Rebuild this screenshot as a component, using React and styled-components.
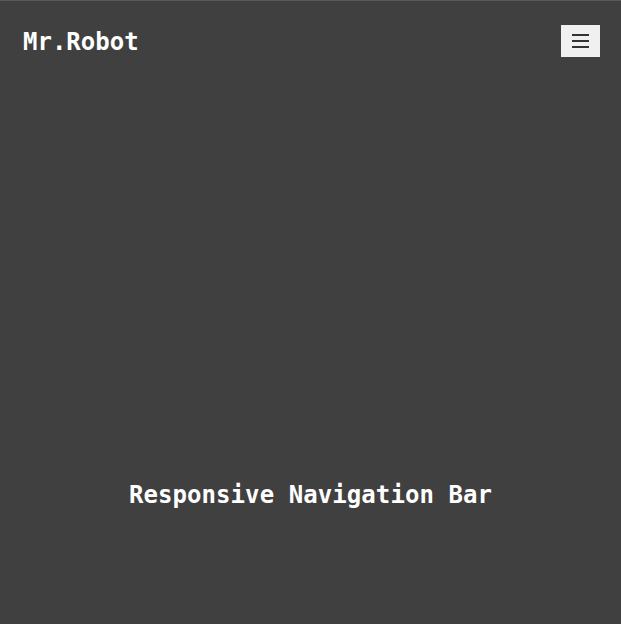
import React from 'react';
import styled, { createGlobalStyle } from 'styled-components';

const GlobalStyle = createGlobalStyle`
  html, body {
    margin: 0;
    padding: 0;
    background: #404040;
  }
  body {
    font-family: "DejaVu Sans Mono", "Liberation Mono", monospace;
    color: #ffffff;
  }
`;

const Page = styled.div`
  min-height: 624px;
  border-top: 1px solid #5a5a5a;
  box-sizing: border-box;
  background: #404040;
`;

const Nav = styled.nav`
  height: 80px;
  display: flex;
  align-items: center;
  justify-content: space-between;
  padding: 0 21px 0 23px;
`;

const Logo = styled.div`
  font-size: 24px;
  font-weight: 700;
  padding-top: 2px;
`;

const MenuButton = styled.button`
  width: 39px;
  height: 32px;
  background: #f0f0f0;
  border: none;
  padding: 0;
  display: flex;
  flex-direction: column;
  align-items: center;
  justify-content: center;
  gap: 4px;
  cursor: pointer;
`;

const Bar = styled.span`
  display: block;
  width: 17px;
  height: 2px;
  background: #333333;
`;

const Hero = styled.main`
  padding-top: 400px;
  text-align: center;
`;

const Heading = styled.h1`
  margin: 0;
  font-size: 24px;
  font-weight: 700;
  line-height: 28px;
  letter-spacing: 0.08px;
`;

export default function App() {
  return (
    <>
      <GlobalStyle />
      <Page>
        <Nav>
          <Logo>Mr.Robot</Logo>
          <MenuButton aria-label="menu">
            <Bar />
            <Bar />
            <Bar />
          </MenuButton>
        </Nav>
        <Hero>
          <Heading>Responsive Navigation Bar</Heading>
        </Hero>
      </Page>
    </>
  );
}
